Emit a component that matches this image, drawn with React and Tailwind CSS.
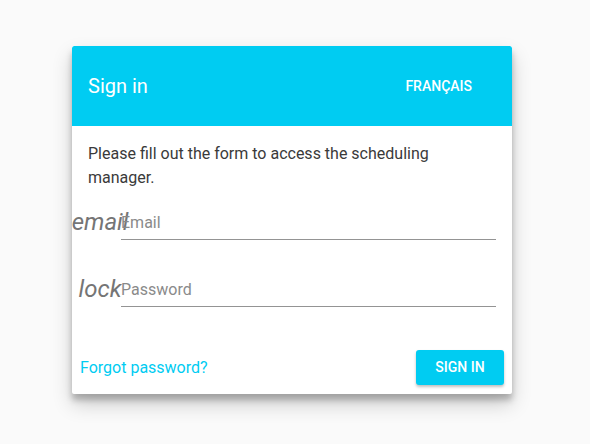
import React from 'react';

const Field = ({ icon, placeholder, type }) => (
  <div className="flex items-end">
    <div className="w-6 flex justify-center ml-4 mr-[9px]">
      <span className="italic text-[24px] leading-none text-[#757575] whitespace-nowrap mb-[6px]">{icon}</span>
    </div>
    <input
      type={type}
      placeholder={placeholder}
      className="flex-1 mr-4 bg-transparent border-b border-[#949494] pb-1 text-[16px] text-[#333] placeholder:text-[#8a8a8a] outline-none"
    />
  </div>
);

export default function App() {
  return (
    <div className="min-h-screen w-full bg-[#fafafa] pt-[46px] font-['Roboto',sans-serif]">
      <div className="ml-[72px] w-[440px] h-[348px] bg-white rounded-[2px] shadow-[0_10px_20px_rgba(0,0,0,0.19),0_6px_6px_rgba(0,0,0,0.23)] flex flex-col overflow-hidden">
        <div className="h-20 bg-[#00ccf2] flex items-center justify-between pl-4 pr-6 rounded-t-[2px]">
          <h1 className="text-[20px] text-white font-normal">Sign in</h1>
          <button className="h-9 px-4 text-[14px] font-medium text-white uppercase">Français</button>
        </div>
        <p className="px-4 pt-4 text-[16px] leading-6 text-[#3a3a3a]">
          Please fill out the form to access the scheduling manager.
        </p>
        <div className="mt-[20px] flex flex-col gap-[37px]">
          <Field icon="email" placeholder="Email" type="email" />
          <Field icon="lock" placeholder="Password" type="password" />
        </div>
        <div className="mt-auto flex items-center justify-between px-2 pb-[9px]">
          <a href="#" className="text-[16px] text-[#00ccf2]">Forgot password?</a>
          <button className="w-[88px] h-[35px] rounded-[3px] bg-[#00ccf2] text-white text-[14px] font-medium uppercase shadow-[0_2px_3px_rgba(0,0,0,0.25)]">Sign in</button>
        </div>
      </div>
    </div>
  );
}
